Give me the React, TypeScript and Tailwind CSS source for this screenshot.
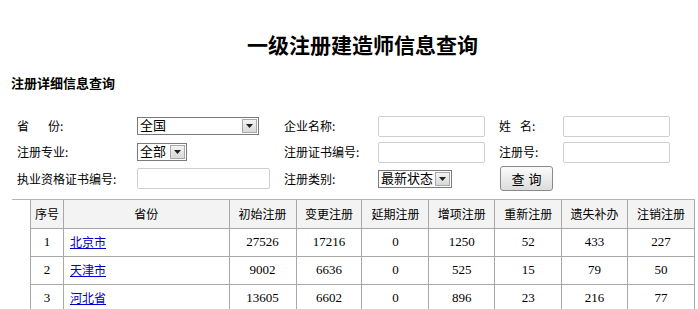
import React from 'react';

const cjk = "font-['SimSun','Noto_Sans_CJK_SC',sans-serif]";

const Select = ({ value, width }: { value: string; width: string }) => (
    <div className={`flex items-center h-[18px] border border-[#7a7a7a] bg-white ${width}`}>
        <span className="flex-1 pl-[2px] text-[13px] leading-[16px] -mt-[2px] text-black">{value}</span>
        <span className="h-[14px] w-[15px] mr-[1px] border border-[#a8a8a8] bg-gradient-to-b from-[#f4f4f4] to-[#d8d8d8] flex items-center justify-center">
            <svg width="7" height="4" viewBox="0 0 7 4"><path d="M0 0h7L3.5 4z" fill="#222" /></svg>
        </span>
    </div>
);

const Input = ({ width }: { width: string }) => (
    <div className={`h-[21px] border border-[#cfcfcf] rounded-[2px] bg-white ${width}`} />
);

const rows = [
    ['1', '北京市', '27526', '17216', '0', '1250', '52', '433', '227'],
    ['2', '天津市', '9002', '6636', '0', '525', '15', '79', '50'],
    ['3', '河北省', '13605', '6602', '0', '896', '23', '216', '77'],
];

const heads = ['序号', '省份', '初始注册', '变更注册', '延期注册', '增项注册', '重新注册', '遗失补办', '注销注册'];
const widths = ['w-[33px]', 'w-[166px]', 'w-[67px]', 'w-[66px]', 'w-[67px]', 'w-[66px]', 'w-[67px]', 'w-[66px]', 'w-[67px]'];

export default function App() {
    return (
        <div className={`w-[698px] h-[309px] overflow-hidden bg-white text-black ${cjk}`}>
            {/* title */}
            <div className="pt-[32px] pl-[247px] h-[70px]">
                <h1 className="text-[21px] leading-[24px] font-bold font-['Noto_Sans_CJK_SC',sans-serif]">一级注册建造师信息查询</h1>
            </div>
            <div className="pl-[11px] h-[43px] pt-[5px]">
                <h2 className="text-[13px] leading-[16px] font-bold font-['Noto_Sans_CJK_SC',sans-serif]">注册详细信息查询</h2>
            </div>

            {/* form */}
            <div className="pl-[17px] flex flex-col text-[12px]">
                <div className="flex items-center h-[26px]">
                    <span className="w-[120px]">省<span className="inline-block w-[19px]" />份:</span>
                    <div className="w-[147px]"><Select value="全国" width="w-[122px]" /></div>
                    <span className="w-[94px]">企业名称:</span>
                    <div className="w-[121px]"><Input width="w-[107px]" /></div>
                    <span className="w-[64px]">姓<span className="inline-block w-[9px]" />名:</span>
                    <Input width="w-[107px]" />
                </div>
                <div className="flex items-center h-[26px]">
                    <span className="w-[120px]">注册专业:</span>
                    <div className="w-[147px]"><Select value="全部" width="w-[50px]" /></div>
                    <span className="w-[94px]">注册证书编号:</span>
                    <div className="w-[121px]"><Input width="w-[107px]" /></div>
                    <span className="w-[64px]">注册号:</span>
                    <Input width="w-[107px]" />
                </div>
                <div className="flex items-center h-[27px]">
                    <span className="w-[120px]">执业资格证书编号:</span>
                    <div className="w-[147px]"><Input width="w-[133px]" /></div>
                    <span className="w-[94px]">注册类别:</span>
                    <div className="w-[122px]"><Select value="最新状态" width="w-[74px]" /></div>
                    <button className="w-[53px] h-[25px] border border-[#8a8a8a] rounded-[3px] bg-gradient-to-b from-[#fbfbfb] to-[#dcdcdc] text-[13px] tracking-[4px] pl-[4px]">查询</button>
                </div>
            </div>

            {/* table */}
            <div className="mt-[7px] ml-[12px] w-[683px] border-t border-[#b5b5b5] pl-[18px]">
                <table className="border-collapse text-[12px]">
                    <thead>
                        <tr className="h-[28px] bg-[#f3f3f3]">
                            {heads.map((h, i) => (
                                <th key={h} className={`${widths[i]} border border-[#a8a8a8] border-t-0 font-normal text-center p-0`}>{h}</th>
                            ))}
                        </tr>
                    </thead>
                    <tbody>
                        {rows.map((r) => (
                            <tr key={r[0]} className="h-[28px]">
                                {r.map((c, i) => (
                                    <td key={i} className={`border border-[#a8a8a8] p-0 ${i === 1 ? 'text-left pl-[6px]' : "text-center font-['Liberation_Serif',serif] text-[13px]"}`}>
                                        {i === 1 ? <a href="#" className="text-[#0000cc] underline">{c}</a> : c}
                                    </td>
                                ))}
                            </tr>
                        ))}
                    </tbody>
                </table>
            </div>
        </div>
    );
}
